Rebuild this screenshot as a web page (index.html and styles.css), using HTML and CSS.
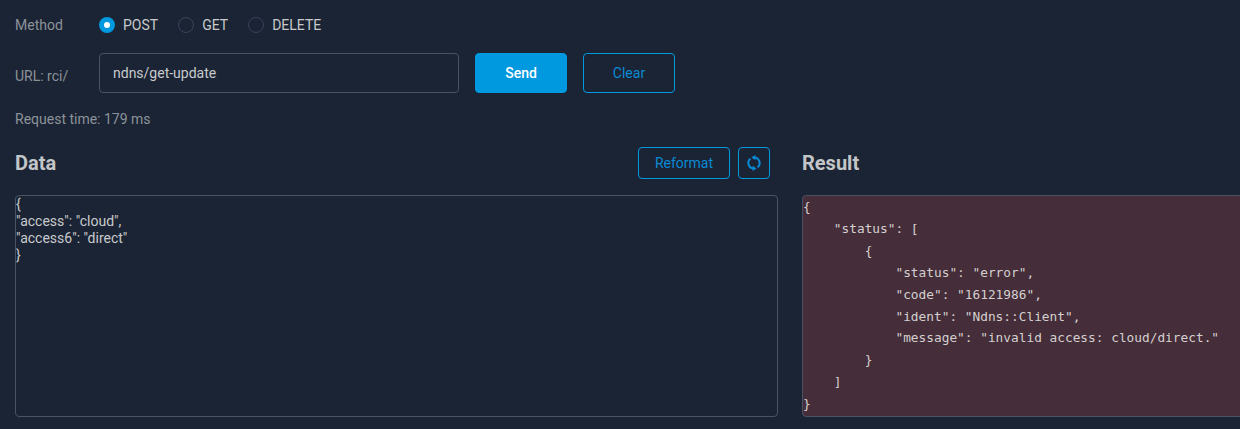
FILE: index.html
```html
<!DOCTYPE html>
<html lang="en">
<head>
<meta charset="utf-8">
<title>API console</title>
<link rel="stylesheet" href="styles.css">
</head>
<body>
<main class="page">
  <div class="method-row">
    <span class="label method-label">Method</span>
    <div class="radios">
      <label class="radio"><span class="dot dot-on"></span>POST</label>
      <label class="radio"><span class="dot"></span>GET</label>
      <label class="radio"><span class="dot"></span>DELETE</label>
    </div>
  </div>
  <div class="url-row">
    <span class="label url-label">URL: rci/</span>
    <div class="url-input">ndns/get-update</div>
    <button class="btn btn-primary">Send</button>
    <button class="btn btn-outline">Clear</button>
  </div>
  <div class="label time">Request time: 179 ms</div>
  <div class="panels">
    <section class="panel">
      <div class="panel-head">
        <h2>Data</h2>
        <div class="tools">
          <button class="btn-small btn-reformat">Reformat</button>
          <button class="btn-small btn-icon" aria-label="Refresh">
            <svg width="16" height="16" viewBox="0 0 16 16" fill="none" stroke="currentColor" stroke-width="2">
              <path d="M8 2.4A5.6 5.6 0 0 1 11.6 12.3"/>
              <path d="M8 13.6A5.6 5.6 0 0 1 4.4 3.7"/>
              <path d="M9.4 0V5.2L5.4 2.6Z" fill="currentColor" stroke="none"/>
              <path d="M6.6 16V10.8L10.6 13.4Z" fill="currentColor" stroke="none"/>
            </svg>
          </button>
        </div>
      </div>
      <pre class="box data-box">{
"access": "cloud",
"access6": "direct"
}</pre>
    </section>
    <section class="panel">
      <div class="panel-head">
        <h2>Result</h2>
      </div>
      <pre class="box result-box">{
    "status": [
        {
            "status": "error",
            "code": "16121986",
            "ident": "Ndns::Client",
            "message": "invalid access: cloud/direct."
        }
    ]
}</pre>
    </section>
  </div>
</main>
</body>
</html>
```
FILE: styles.css
```css
* { box-sizing: border-box; }
html, body {
  margin: 0;
  height: 429px;
  overflow: hidden;
  background: #1b2434;
}
body {
  font-family: Roboto, "Liberation Sans", sans-serif;
  font-size: 14px;
  color: #c8cacc;
}
.page {
  width: 1240px;
  overflow: hidden;
  padding: 13px 0 0 15px;
}
.label { color: #8b9299; }
.method-row {
  display: flex;
  align-items: center;
  height: 23px;
}
.method-label { width: 84px; }
.radios { display: flex; gap: 20px; }
.radio {
  display: flex;
  align-items: center;
  gap: 8px;
  line-height: 16px;
}
.dot {
  width: 16px;
  height: 16px;
  border-radius: 50%;
  border: 1px solid #36445c;
}
.dot-on {
  border: 5px solid #0098de;
  background: #fff;
}
.url-row {
  display: flex;
  align-items: center;
  margin-top: 17px;
  height: 40px;
}
.url-label { width: 84px; padding-top: 6px; }
.url-input {
  width: 360px;
  height: 40px;
  line-height: 38px;
  padding: 0 13px;
  margin-right: 16px;
  border: 1px solid #4a5260;
  border-radius: 4px;
}
.btn {
  width: 92px;
  height: 40px;
  margin-right: 16px;
  border-radius: 4px;
  font: 500 14px Roboto, sans-serif;
}
.btn-primary {
  background: #0098de;
  border: 1px solid #0098de;
  color: #fff;
}
.btn-outline {
  background: transparent;
  border: 1px solid #0098de;
  color: #0a8ad6;
  font-weight: 400;
}
.time {
  margin-top: 17px;
  line-height: 18px;
}
.panels {
  display: grid;
  grid-template-columns: 763px 763px;
  column-gap: 24px;
  margin-top: 19px;
}
.panel-head {
  display: flex;
  align-items: center;
  justify-content: space-between;
  height: 32px;
  margin-bottom: 16px;
}
h2 {
  margin: 0;
  font-size: 20px;
  font-weight: 700;
  color: #c3c6c9;
}
.tools {
  display: flex;
  gap: 8px;
  margin-right: 8px;
}
.btn-small {
  height: 32px;
  border: 1px solid #0098de;
  border-radius: 4px;
  background: transparent;
  color: #0a8ad6;
  font: 400 14px Roboto, sans-serif;
  padding: 0;
}
.btn-reformat { width: 92px; }
.btn-icon {
  width: 32px;
  display: flex;
  align-items: center;
  justify-content: center;
}
.box {
  margin: 0;
  height: 222px;
  border: 1px solid #4a5260;
  border-radius: 4px;
  overflow: hidden;
}
.data-box {
  font-family: Roboto, sans-serif;
  font-size: 14px;
  line-height: 17px;
  color: #c8cacc;
}
.result-box {
  background: #452d39;
  font-family: "DejaVu Sans Mono", monospace;
  font-size: 12.8px;
  line-height: 21.9px;
  color: #d4d0cf;
}
```
